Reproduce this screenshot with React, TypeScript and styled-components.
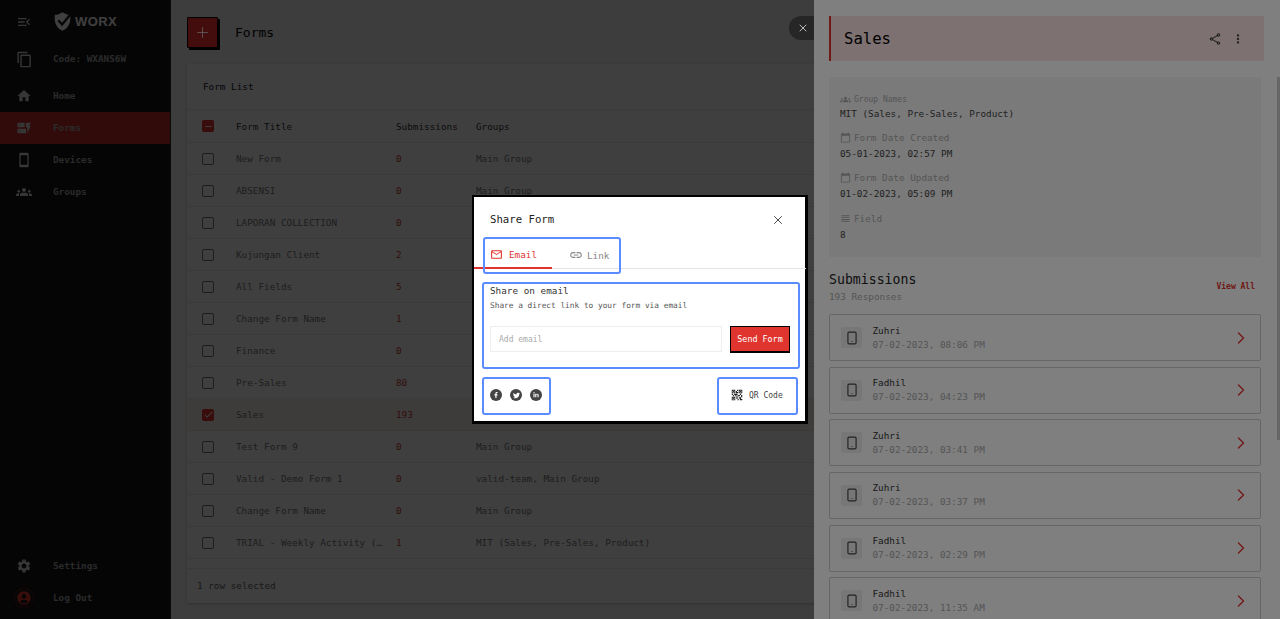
import styled, { createGlobalStyle } from "styled-components";
import { ChevronRight, Plus, Smartphone, X } from "lucide-react";
import { FaFacebookF, FaLinkedinIn, FaTwitter } from "react-icons/fa";
import {
  MdAccountCircle,
  MdCalendarToday,
  MdContentCopy,
  MdDynamicForm,
  MdGroups,
  MdHome,
  MdLink,
  MdMailOutline,
  MdMenuOpen,
  MdMoreVert,
  MdOutlineShare,
  MdQrCode2,
  MdReorder,
  MdSettings,
  MdSmartphone,
  MdCheck,
  MdRemove,
} from "react-icons/md";

const forms: { title: string; count: string; groups: string; selected?: boolean }[] = [
  { title: "New Form", count: "0", groups: "Main Group" },
  { title: "ABSENSI", count: "0", groups: "Main Group" },
  { title: "LAPORAN COLLECTION", count: "0", groups: "Main Group" },
  { title: "Kujungan Client", count: "2", groups: "Main Group" },
  { title: "All Fields", count: "5", groups: "Main Group" },
  { title: "Change Form Name", count: "1", groups: "Main Group" },
  { title: "Finance", count: "0", groups: "Main Group" },
  { title: "Pre-Sales", count: "80", groups: "Main Group" },
  { title: "Sales", count: "193", groups: "MIT (Sales, Pre-Sales, Product)", selected: true },
  { title: "Test Form 9", count: "0", groups: "Main Group" },
  { title: "Valid - Demo Form 1", count: "0", groups: "valid-team, Main Group" },
  { title: "Change Form Name", count: "0", groups: "Main Group" },
  { title: "TRIAL - Weekly Activity (Sales)", count: "1", groups: "MIT (Sales, Pre-Sales, Product)" },
];

const submissions = [
  { name: "Zuhri", date: "07-02-2023, 08:06 PM" },
  { name: "Fadhil", date: "07-02-2023, 04:23 PM" },
  { name: "Zuhri", date: "07-02-2023, 03:41 PM" },
  { name: "Zuhri", date: "07-02-2023, 03:37 PM" },
  { name: "Fadhil", date: "07-02-2023, 02:29 PM" },
  { name: "Fadhil", date: "07-02-2023, 11:35 AM" },
];

const App = () => {
  return (
    <>
      <GlobalStyle />
      <Shell>
        <Sidebar>
          <SidebarTop>
            <BrandRow>
              <MdMenuOpen size={16} />
              <Logo viewBox="0 0 20 22">
                <path
                  d="M10 0 C7 2 4 3 1 3 C0 11 2 18 10 22 C18 18 20 11 19 3 C16 3 13 2 10 0 Z"
                  fill="#fff"
                />
                <path d="M5 9.5 L9.5 14.5 L19 3" fill="none" stroke="#141414" strokeWidth="2.6" />
              </Logo>
              <BrandName>WORX</BrandName>
            </BrandRow>
            <CodeRow>
              <MdContentCopy size={17} />
              <NavLabel>Code: WXANS6W</NavLabel>
            </CodeRow>
            <NavItem>
              <MdHome size={16} />
              <NavLabel>Home</NavLabel>
            </NavItem>
            <NavItem $active>
              <MdDynamicForm size={16} />
              <NavLabel>Forms</NavLabel>
            </NavItem>
            <NavItem>
              <MdSmartphone size={16} />
              <NavLabel>Devices</NavLabel>
            </NavItem>
            <NavItem>
              <MdGroups size={16} />
              <NavLabel>Groups</NavLabel>
            </NavItem>
          </SidebarTop>
          <div>
            <NavItem>
              <MdSettings size={16} />
              <NavLabel>Settings</NavLabel>
            </NavItem>
            <NavItem>
              <LogoutIcon>
                <MdAccountCircle size={16} />
              </LogoutIcon>
              <NavLabel>Log Out</NavLabel>
            </NavItem>
          </div>
        </Sidebar>

        <Main>
          <PageHeader>
            <AddButton>
              <Plus size={17} strokeWidth={1.2} />
            </AddButton>
            <PageTitle>Forms</PageTitle>
          </PageHeader>
          <TableCard>
            <CardTitle>Form List</CardTitle>
            <HeaderRow>
              <CheckBox $checked>
                <MdRemove size={11} />
              </CheckBox>
              <TitleCell>Form Title</TitleCell>
              <CountHead>Submissions</CountHead>
              <GroupCell>Groups</GroupCell>
            </HeaderRow>
            {forms.map((form, index) => (
              <Row key={index} $selected={form.selected}>
                <CheckBox $checked={form.selected}>
                  {form.selected && <MdCheck size={11} />}
                </CheckBox>
                <TitleCell>{form.title}</TitleCell>
                <CountCell>{form.count}</CountCell>
                <GroupCell>{form.groups}</GroupCell>
              </Row>
            ))}
            <TableFooter>1 row selected</TableFooter>
          </TableCard>
        </Main>
      </Shell>

      <DrawerBackdrop />
      <DrawerClose>
        <X size={12} strokeWidth={1.6} />
      </DrawerClose>
      <Drawer>
        <DrawerHeader>
          <DrawerTitle>Sales</DrawerTitle>
          <DrawerActions>
            <MdOutlineShare size={14} />
            <MdMoreVert size={14} />
          </DrawerActions>
        </DrawerHeader>
        <DrawerBody>
          <InfoCard>
            <GroupLabel>
              <MdGroups size={11} />
              Group Names
            </GroupLabel>
            <GroupValue>MIT (Sales, Pre-Sales, Product)</GroupValue>
            <InfoLabel>
              <MdCalendarToday size={11} />
              Form Date Created
            </InfoLabel>
            <InfoValue>05-01-2023, 02:57 PM</InfoValue>
            <InfoLabel>
              <MdCalendarToday size={11} />
              Form Date Updated
            </InfoLabel>
            <InfoValue>01-02-2023, 05:09 PM</InfoValue>
            <InfoLabel>
              <MdReorder size={11} />
              Field
            </InfoLabel>
            <InfoValue>8</InfoValue>
          </InfoCard>
          <SubmissionsHead>
            <div>
              <SubmissionsTitle>Submissions</SubmissionsTitle>
              <SubmissionsCount>193 Responses</SubmissionsCount>
            </div>
            <ViewAll>View All</ViewAll>
          </SubmissionsHead>
          {submissions.map((item, index) => (
            <SubmissionCard key={index}>
              <DeviceBox>
                <Smartphone size={14} strokeWidth={2} />
              </DeviceBox>
              <SubmissionText>
                <SubmissionName>{item.name}</SubmissionName>
                <SubmissionDate>{item.date}</SubmissionDate>
              </SubmissionText>
              <ChevronRight size={20} strokeWidth={1.6} color="#e53030" />
            </SubmissionCard>
          ))}
        </DrawerBody>
        <DrawerScrollThumb />
      </Drawer>

      <ModalBackdrop>
        <Modal>
          <ModalHeader>
            <ModalTitle>Share Form</ModalTitle>
            <X size={14} strokeWidth={1.4} />
          </ModalHeader>
          <TabsBar>
            <Tab $active>
              <MdMailOutline size={13} />
              Email
            </Tab>
            <Tab>
              <MdLink size={14} />
              Link
            </Tab>
          </TabsBar>
          <EmailPanel>
            <PanelTitle>Share on email</PanelTitle>
            <PanelHint>Share a direct link to your form via email</PanelHint>
            <EmailRow>
              <EmailInput placeholder="Add email" />
              <SendButton>Send Form</SendButton>
            </EmailRow>
          </EmailPanel>
          <ModalFooter>
            <SocialBox>
              <SocialIcon>
                <FaFacebookF size={6} />
              </SocialIcon>
              <SocialIcon>
                <FaTwitter size={7} />
              </SocialIcon>
              <SocialIcon>
                <FaLinkedinIn size={6} />
              </SocialIcon>
            </SocialBox>
            <QrBox>
              <MdQrCode2 size={14} color="#222" />
              QR Code
            </QrBox>
          </ModalFooter>
        </Modal>
      </ModalBackdrop>
    </>
  );
};

export default App;

const GlobalStyle = createGlobalStyle`
  html, body {
    margin: 0;
    height: 100%;
    overflow: hidden;
  }
  body {
    font-family: "DejaVu Sans Mono", "Liberation Mono", monospace;
    font-size: 9.33px;
  }
  #root {
    opacity: 0.999;
  }
  * {
    box-sizing: border-box;
  }
`;

const Shell = styled.div`
  display: flex;
  height: 100vh;
  background: #f4f4f4;
`;

const Sidebar = styled.aside`
  width: 171px;
  flex-shrink: 0;
  display: flex;
  flex-direction: column;
  justify-content: space-between;
  background: #141414;
  border-right: 1px solid #333;
  color: #d8d8d8;
  padding-bottom: 5px;
`;

const SidebarTop = styled.div`
  display: flex;
  flex-direction: column;
`;

const BrandRow = styled.div`
  display: flex;
  align-items: center;
  height: 43px;
  padding-left: 16px;
`;

const Logo = styled.svg`
  width: 17px;
  height: 19px;
  margin-left: 22px;
`;

const BrandName = styled.span`
  margin-left: 4px;
  font-family: "Liberation Sans", sans-serif;
  font-size: 13px;
  font-weight: 700;
  letter-spacing: 0.4px;
  color: #fff;
`;

const CodeRow = styled.div`
  display: flex;
  align-items: center;
  height: 32px;
  padding-left: 16px;
  margin-bottom: 5px;
`;

const NavItem = styled.div<{ $active?: boolean }>`
  display: flex;
  align-items: center;
  height: 32px;
  padding-left: 16px;
  background: ${(p) => (p.$active ? "#c42f2a" : "transparent")};
`;

const NavLabel = styled.span`
  margin-left: 21px;
  padding-bottom: 1px;
  font-weight: 700;
  color: #aaa;

  ${CodeRow} > & {
    margin-left: 20px;
  }
`;

const LogoutIcon = styled.span`
  display: flex;
  color: #e0352f;
  border-radius: 50%;
  box-shadow: 0 0 0 3px rgba(224, 53, 47, 0.12);
`;

const Main = styled.main`
  flex: 1;
  padding: 16px 16px 16px;
  min-width: 0;
`;

const PageHeader = styled.div`
  display: flex;
  align-items: center;
  height: 32px;
  margin-bottom: 16px;
`;

const AddButton = styled.button`
  position: relative;
  z-index: 1;
  width: 31px;
  height: 31px;
  display: flex;
  align-items: center;
  justify-content: center;
  padding: 0;
  border: 1px solid #000;
  border-radius: 1px;
  background: #861a1d;
  color: #bbb;
  box-shadow: 2px 2px 0 #000;
`;

const PageTitle = styled.h1`
  margin: 0 0 0 17px;
  font-size: 13px;
  font-weight: 400;
  color: #000;
`;

const TableCard = styled.section`
  background: #fff;
  border-radius: 2px;
  box-shadow: 0 1px 3px rgba(0, 0, 0, 0.2);
`;

const CardTitle = styled.div`
  display: flex;
  align-items: center;
  height: 46px;
  padding-left: 16px;
  color: #14142e;
  border-bottom: 1px solid #e8e8e8;
`;

const HeaderRow = styled.div`
  display: flex;
  align-items: center;
  height: 33px;
  padding-left: 15px;
  color: #333;
  border-bottom: 1px solid #e8e8e8;
`;

const Row = styled.div<{ $selected?: boolean }>`
  display: flex;
  align-items: center;
  height: 32px;
  padding-left: 15px;
  color: #777;
  background: ${(p) => (p.$selected ? "#fbeeee" : "transparent")};
  border-bottom: 1px solid #e8e8e8;
`;

const CheckBox = styled.span<{ $checked?: boolean }>`
  width: 12px;
  height: 12px;
  display: flex;
  align-items: center;
  justify-content: center;
  border-radius: 2px;
  color: #fff;
  border: ${(p) => (p.$checked ? "none" : "1px solid #777")};
  background: ${(p) => (p.$checked ? "#e0352f" : "transparent")};
`;

const TitleCell = styled.span`
  width: 160px;
  margin-left: 22px;
  padding-right: 10px;
  white-space: nowrap;
  overflow: hidden;
  text-overflow: ellipsis;
`;

const CountHead = styled.span`
  width: 80px;
`;

const CountCell = styled.span`
  width: 80px;
  color: #c83a36;
`;

const GroupCell = styled.span`
  white-space: nowrap;
`;

const TableFooter = styled.div`
  display: flex;
  align-items: center;
  height: 35px;
  margin-top: 9px;
  padding: 0 0 2px 10px;
  color: #666;
  border-top: 1px solid #e8e8e8;
`;

const DrawerBackdrop = styled.div`
  position: fixed;
  inset: 0;
  background: rgba(0, 0, 0, 0.5);
`;

const DrawerClose = styled.button`
  position: fixed;
  z-index: 3;
  top: 16px;
  right: 466px;
  width: 25px;
  height: 24px;
  display: flex;
  align-items: center;
  justify-content: center;
  padding: 0 0 0 2px;
  border: none;
  border-radius: 12px 0 0 12px;
  background: #262626;
  color: #ddd;
`;

const Drawer = styled.aside`
  position: fixed;
  top: 0;
  right: 0;
  bottom: 0;
  width: 466px;
  padding: 16px 0 0 15px;
  background: #fff;
  overflow: hidden;
`;

const DrawerHeader = styled.header`
  display: flex;
  align-items: center;
  justify-content: space-between;
  width: 435px;
  height: 45px;
  padding: 0 19px 0 13px;
  margin-bottom: 16px;
  background: #fbe3e3;
  border-left: 2px solid #e0352f;
`;

const DrawerTitle = styled.h2`
  margin: 0;
  font-size: 15.6px;
  font-weight: 400;
  color: #000;
`;

const DrawerActions = styled.div`
  display: flex;
  align-items: center;
  gap: 9px;
  color: #444;
`;

const DrawerBody = styled.div`
  width: 432px;
`;

const DrawerScrollThumb = styled.div`
  position: absolute;
  top: 77px;
  right: 0;
  width: 3px;
  height: 363px;
  background: #ccc;
`;

const InfoCard = styled.section`
  height: 180px;
  padding: 17px 11px 0;
  background: #f5f5f5;
`;

const GroupLabel = styled.div`
  display: flex;
  align-items: center;
  gap: 3px;
  height: 10px;
  font-size: 8px;
  color: #aaa;
`;

const GroupValue = styled.div`
  margin-top: 3px;
  margin-bottom: 9px;
  line-height: 14px;
  color: #444;
`;

const InfoLabel = styled.div`
  display: flex;
  align-items: center;
  gap: 3px;
  height: 14px;
  color: #aaa;
`;

const InfoValue = styled.div`
  margin-top: 2.5px;
  margin-bottom: 10px;
  line-height: 14px;
  color: #444;
`;

const SubmissionsHead = styled.div`
  display: flex;
  align-items: center;
  justify-content: space-between;
  height: 57px;
  padding: 2px 6px 0 0;
`;

const SubmissionsTitle = styled.div`
  font-size: 13.2px;
  line-height: 18px;
  color: #222;
`;

const SubmissionsCount = styled.div`
  margin-top: 2px;
  color: #aaa;
`;

const ViewAll = styled.span`
  font-size: 8px;
  font-weight: 700;
  color: #e0352f;
`;

const SubmissionCard = styled.article`
  display: flex;
  align-items: center;
  height: 47px;
  margin-bottom: 5.67px;
  padding: 0 9px 0 11px;
  border: 1px solid #ccc;
  border-radius: 2px;
`;

const DeviceBox = styled.span`
  width: 21px;
  height: 21px;
  display: flex;
  align-items: center;
  justify-content: center;
  border-radius: 2px;
  background: #eee;
  color: #444;
`;

const SubmissionText = styled.div`
  flex: 1;
  margin-left: 10.5px;
`;

const SubmissionName = styled.div`
  line-height: 14px;
  color: #333;
`;

const SubmissionDate = styled.div`
  line-height: 14px;
  color: #aaa;
`;

const ModalBackdrop = styled.div`
  position: fixed;
  inset: 0;
  z-index: 2;
  display: flex;
  align-items: center;
  justify-content: center;
  background: rgba(0, 0, 0, 0.5);
`;

const Modal = styled.div`
  width: 336px;
  height: 229px;
  background: #fff;
  border: 2px solid #000;
  box-shadow: inset -1px -1px 0 #000;
`;

const ModalHeader = styled.div`
  display: flex;
  align-items: center;
  justify-content: space-between;
  height: 40px;
  padding: 5px 21px 0 16px;
  color: #222;
`;

const ModalTitle = styled.h3`
  margin: 0;
  font-size: 10.67px;
  font-weight: 400;
  color: #222;
`;

const TabsBar = styled.div`
  position: relative;
  display: flex;
  height: 32px;
  border-bottom: 1px solid #e4e4e4;

  &::after {
    content: "";
    position: absolute;
    left: 9px;
    top: 0;
    width: 134px;
    height: 33px;
    border: 2px solid #5b8cff;
    border-radius: 3px;
  }
`;

const Tab = styled.div<{ $active?: boolean }>`
  display: flex;
  align-items: center;
  gap: ${(p) => (p.$active ? "6px" : "4px")};
  width: 78px;
  height: 32px;
  padding: 4px 0 0 ${(p) => (p.$active ? "16px" : "17px")};
  color: ${(p) => (p.$active ? "#e0352f" : "#888")};
  border-bottom: ${(p) => (p.$active ? "2px solid #e0352f" : "none")};
`;

const EmailPanel = styled.section`
  height: 87px;
  margin: 13px 6px 0 8px;
  padding: 1px 6px 0;
  border: 2px solid #5b8cff;
  border-radius: 3px;
`;

const PanelTitle = styled.div`
  line-height: 12px;
  color: #333;
`;

const PanelHint = styled.div`
  margin-top: 3px;
  line-height: 11px;
  font-size: 7.8px;
  color: #555;
`;

const EmailRow = styled.div`
  display: flex;
  gap: 8px;
  margin-top: 15px;
`;

const EmailInput = styled.input`
  width: 232px;
  height: 26px;
  padding: 0 8px;
  font-family: inherit;
  font-size: 8px;
  border: 1px solid #eee;
  outline: none;

  &::placeholder {
    color: #aaa;
  }
`;

const SendButton = styled.button`
  width: 60px;
  height: 26px;
  padding: 0;
  font-family: inherit;
  font-size: 8.4px;
  color: #fff;
  background: #e0352f;
  border: 1px solid #000;
  box-shadow: 0 1px 0 #000;
`;

const ModalFooter = styled.div`
  display: flex;
  justify-content: space-between;
  margin: 8px 8px 0;
`;

const SocialBox = styled.div`
  display: flex;
  align-items: center;
  gap: 8px;
  width: 69px;
  height: 38px;
  padding: 0 0 2px 6px;
  border: 2px solid #5b8cff;
  border-radius: 3px;
`;

const SocialIcon = styled.span`
  width: 12px;
  height: 12px;
  display: flex;
  align-items: center;
  justify-content: center;
  border-radius: 50%;
  background: #444;
  color: #fff;
`;

const QrBox = styled.div`
  display: flex;
  align-items: center;
  gap: 5px;
  width: 81px;
  height: 38px;
  padding: 0 0 2px 11px;
  font-size: 8px;
  color: #444;
  border: 2px solid #5b8cff;
  border-radius: 3px;
`;
